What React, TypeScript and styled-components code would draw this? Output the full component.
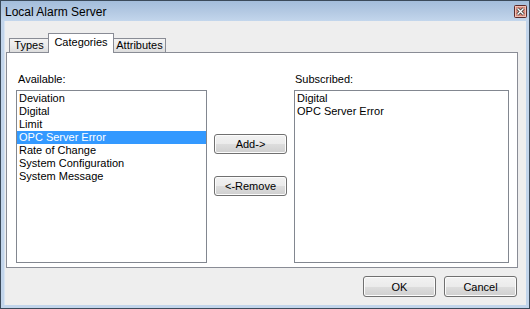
import React from "react";
import styled, { createGlobalStyle } from "styled-components";

const GlobalStyle = createGlobalStyle`
  html, body {
    margin: 0;
    padding: 0;
    background: #ffffff;
  }
  * {
    box-sizing: border-box;
  }
`;

const available = [
  "Deviation",
  "Digital",
  "Limit",
  "OPC Server Error",
  "Rate of Change",
  "System Configuration",
  "System Message",
];

const subscribed = ["Digital", "OPC Server Error"];

const tabs = [
  { label: "Types", width: 40 },
  { label: "Categories", width: 66 },
  { label: "Attributes", width: 53 },
];

const CloseIcon = () => (
  <svg width="13" height="13" viewBox="0 0 13 13">
    <rect x="0.5" y="0.5" width="12" height="12" rx="1" fill="#d98a7c" stroke="#5a2a2a" />
    <rect x="1.5" y="1.5" width="10" height="10" fill="none" stroke="#f0c0b4" />
    <path d="M3.5 3.5 L9.5 9.5 M9.5 3.5 L3.5 9.5" stroke="#3a3a3a" strokeWidth="3" />
    <path d="M3.5 3.5 L9.5 9.5 M9.5 3.5 L3.5 9.5" stroke="#ffffff" strokeWidth="1.4" />
  </svg>
);

export default function App() {
  return (
    <>
      <GlobalStyle />
      <Window>
        <TitleBar>
          <Title>Local Alarm Server</Title>
          <CloseIcon />
        </TitleBar>
        <Body>
          <TabRow>
            {tabs.map((t) => (
              <Tab key={t.label} $active={t.label === "Categories"} $width={t.width}>
                {t.label}
              </Tab>
            ))}
          </TabRow>
          <Panel>
            <Column>
              <Label>Available:</Label>
              <ListBox $width={191}>
                {available.map((item) => (
                  <Item key={item} $selected={item === "OPC Server Error"}>
                    {item}
                  </Item>
                ))}
              </ListBox>
            </Column>
            <Middle>
              <Button>Add-&gt;</Button>
              <Button>&lt;-Remove</Button>
            </Middle>
            <Column>
              <Label $shift={-1}>Subscribed:</Label>
              <ListBox $width={215}>
                {subscribed.map((item) => (
                  <Item key={item}>{item}</Item>
                ))}
              </ListBox>
            </Column>
          </Panel>
          <Footer>
            <Button>OK</Button>
            <Button>Cancel</Button>
          </Footer>
        </Body>
      </Window>
    </>
  );
}

const Window = styled.div`
  width: 530px;
  height: 309px;
  border: 1px solid #3b4a5a;
  background: #c2d5eb;
  display: flex;
  flex-direction: column;
  font-family: "Liberation Sans", Arial, sans-serif;
  font-size: 11px;
  color: #000000;
`;

const TitleBar = styled.div`
  height: 20px;
  display: flex;
  align-items: center;
  justify-content: space-between;
  padding: 0 2px 0 4px;
  background: linear-gradient(to bottom, #a3bddb 0%, #b6cbe4 60%, #c3d6ec 100%);
`;

const Title = styled.span`
  font-size: 12px;
  color: #000000;
  padding-top: 1px;
`;

const Body = styled.div`
  flex: 1;
  margin: 0 3px 3px 3px;
  background: #eeeeee;
  border-left: 1px solid #d8e4f2;
  padding: 12px 8px 0 1px;
  display: flex;
  flex-direction: column;
`;

const TabRow = styled.div`
  height: 20px;
  margin-bottom: -1px;
  padding-left: 3px;
  display: flex;
  align-items: flex-end;
  position: relative;
  z-index: 1;
`;

const Tab = styled.div<{ $active?: boolean; $width: number }>`
  width: ${(p) => p.$width}px;
  height: ${(p) => (p.$active ? 20 : 15)}px;
  margin-left: -1px;
  border: 1px solid #898c95;
  border-bottom: ${(p) => (p.$active ? "none" : "1px solid #898c95")};
  background: ${(p) =>
    p.$active ? "#ffffff" : "linear-gradient(to bottom, #f3f3f3 0%, #ebebeb 50%, #dddddd 100%)"};
  z-index: ${(p) => (p.$active ? 2 : 1)};
  display: flex;
  align-items: ${(p) => (p.$active ? "flex-start" : "center")};
  justify-content: center;
  padding-top: ${(p) => (p.$active ? "2px" : "0")};
  font-size: 11px;
  line-height: 13px;

  &:first-child {
    margin-left: 0;
  }
`;

const Panel = styled.div`
  width: 512px;
  height: 216px;
  border: 1px solid #898c95;
  background: #ffffff;
  display: flex;
  padding: 0 8px 4px 9px;
  gap: 7px;
`;

const Column = styled.div`
  display: flex;
  flex-direction: column;
`;

const Label = styled.div<{ $shift?: number }>`
  height: 13px;
  line-height: 13px;
  margin: 20px 0 4px ${(p) => 2 + (p.$shift ?? 0)}px;
`;

const ListBox = styled.div<{ $width: number }>`
  width: ${(p) => p.$width}px;
  height: 173px;
  border: 1px solid #828790;
  background: #ffffff;
  padding-top: 1px;
  display: flex;
  flex-direction: column;
`;

const Item = styled.div<{ $selected?: boolean }>`
  height: 13px;
  line-height: 13px;
  padding-left: 2px;
  white-space: nowrap;
  background: ${(p) => (p.$selected ? "#3399ff" : "transparent")};
  color: ${(p) => (p.$selected ? "#ffffff" : "#000000")};
`;

const Middle = styled.div`
  display: flex;
  flex-direction: column;
  gap: 22px;
  padding-top: 81px;
`;

const Button = styled.button`
  width: 73px;
  height: 20px;
  padding: 0;
  border: 1px solid #707070;
  border-radius: 3px;
  background: linear-gradient(to bottom, #f2f2f2 0%, #ebebeb 50%, #dddddd 51%, #cfcfcf 100%);
  box-shadow: inset 0 0 0 1px #fcfcfc;
  font-family: "Liberation Sans", Arial, sans-serif;
  font-size: 11px;
  color: #000000;
`;

const Footer = styled.div`
  display: flex;
  justify-content: flex-end;
  gap: 8px;
  padding: 8px 1px 0 0;

  ${Button} {
    height: 21px;
  }
`;
